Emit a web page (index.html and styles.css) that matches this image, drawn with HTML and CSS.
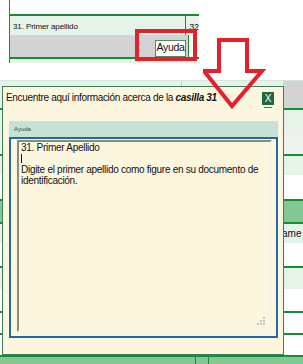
FILE: index.html
```html
<!DOCTYPE html>
<html lang="es">
<head>
    <meta charset="UTF-8">
    <title>Ayuda casilla 31</title>
    <link rel="stylesheet" href="styles.css">
</head>
<body>
    <div class="page">
        <div class="sheet">
            <div class="sheet-gap"></div>
            <div class="sheet-head">
                <div class="cell-label">31. Primer apellido</div>
                <div class="cell-next">32</div>
            </div>
            <div class="sheet-tools">
                <div class="tools-main">
                    <span class="btn-help">Ayuda</span>
                </div>
                <div class="tools-next"></div>
            </div>
            <div class="sheet-foot"></div>
        </div>

        <div class="back">
            <div class="back-strip">
                <div class="strip-a"></div>
                <div class="strip-b"></div>
                <div class="strip-grey"></div>
            </div>
            <div class="back-row line">
                <div class="band light h20"></div>
                <div class="band pale h24"></div>
            </div>
            <div class="back-row line">
                <div class="band light h19"></div>
                <div class="band white h24"></div>
            </div>
            <div class="back-row line">
                <div class="band fill h21"></div>
            </div>
            <div class="back-row line">
                <div class="band light h19 peek">ame</div>
                <div class="band white h23"></div>
            </div>
            <div class="back-row line">
                <div class="band light h21"></div>
                <div class="band white h22"></div>
            </div>
            <div class="back-row line">
                <div class="band white h20"></div>
            </div>
            <div class="back-row line">
                <div class="band white h20"></div>
            </div>
            <div class="back-row line">
                <div class="band fill h8 split">
                    <div class="split-a"></div>
                    <div class="split-b"></div>
                </div>
            </div>
        </div>

        <!-- ventana de ayuda -->
        <div class="dialog">
            <div class="dialog-title">
                <span>Encuentre aquí información acerca de la <b><i>casilla 31</i></b></span>
                <span class="dialog-close">X</span>
            </div>
            <div class="panel">
                <div class="panel-head">Ayuda</div>
                <div class="panel-body">
                    <div class="help-text">
                        <div>31. Primer Apellido</div>
                        <div><span class="caret"></span></div>
                        <div>Digite el primer apellido como figure en su documento de identificación.</div>
                        <span class="grip">
                            <svg width="9" height="9" viewBox="0 0 9 9">
                                <rect x="6" y="0" width="2" height="2" fill="#c9c5b8"/>
                                <rect x="3" y="3" width="2" height="2" fill="#c9c5b8"/>
                                <rect x="6" y="3" width="2" height="2" fill="#c9c5b8"/>
                                <rect x="0" y="6" width="2" height="2" fill="#c9c5b8"/>
                                <rect x="3" y="6" width="2" height="2" fill="#c9c5b8"/>
                                <rect x="6" y="6" width="2" height="2" fill="#c9c5b8"/>
                            </svg>
                        </span>
                    </div>
                </div>
            </div>
        </div>

        <div class="callout"></div>
        <svg class="arrow" width="66" height="76" viewBox="0 0 66 76">
            <polygon points="16,2 44,2 44,33 59,33 29,68 1,33 16,33" fill="none" stroke="#e3202b" stroke-width="4" stroke-linejoin="miter"/>
        </svg>
    </div>
</body>
</html>
```

FILE: styles.css
```css
body {
    margin: 0;
    background-color: #fff;
    font-family: "Liberation Sans", Arial, sans-serif;
    color: #111;
}

.page {
    position: relative;
    width: 303px;
    height: 364px;
    overflow: hidden;
}

/* tabla superior */
.sheet {
    margin-left: 9px;
    width: 189px;
    border-left: 1px solid #168c36;
}

.sheet-gap {
    height: 14px;
}

.sheet-head {
    display: flex;
    height: 19px;
    border-top: 2px solid #168c36;
    background-color: #e6f3e9;
    font-size: 8px;
    letter-spacing: -0.1px;
}

.cell-label {
    width: 175px;
    padding: 6px 0 0 3px;
}

.cell-next {
    flex: 1;
    border-left: 1px solid #168c36;
    padding: 6px 0 0 3px;
    font-size: 9px;
}

.sheet-tools {
    display: flex;
    height: 22px;
}

.tools-main {
    width: 178px;
    background-color: #d3d3d3;
    display: flex;
    justify-content: flex-end;
    align-items: flex-start;
    padding-top: 5px;
    box-sizing: border-box;
}

.tools-next {
    flex: 1;
    border-left: 1px solid #168c36;
}

.btn-help {
    width: 29px;
    height: 15px;
    margin-right: 2px;
    border: 1px solid #4f8a61;
    background-color: #fff;
    font-size: 10.5px;
    letter-spacing: -0.3px;
    line-height: 12px;
    text-align: center;
    overflow: hidden;
}

.sheet-foot {
    height: 4px;
    border-top: 2px solid #168c36;
    background-color: #e6f3e9;
}

/* fondo inferior */
.back {
    margin-top: 17px;
}

.back-strip {
    display: flex;
    height: 27px;
    border-top: 1px solid #d6e6da;
}

.strip-a {
    width: 181px;
    border-right: 1px solid #b9cfc0;
    background-color: #e6f3e9;
}

.strip-b {
    width: 101px;
    background-color: #e6f3e9;
}

.strip-grey {
    flex: 1;
    background-color: #d3d3d3;
}

.line {
    border-top: 2px solid #168c36;
}

.band.light { background-color: #e6f3e9; }
.band.pale { background-color: #eef2ef; }
.band.white { background-color: #fff; }
.band.fill { background-color: #82c794; }

.h8 { height: 8px; }
.h19 { height: 19px; }
.h20 { height: 20px; }
.h21 { height: 21px; }
.h22 { height: 22px; }
.h23 { height: 23px; }
.h24 { height: 24px; }

.peek {
    padding-left: 282px;
    font-size: 10px;
    line-height: 19px;
    white-space: nowrap;
    box-sizing: border-box;
}

.split {
    display: flex;
}

.split-a {
    width: 195px;
    border-right: 1px solid #168c36;
}

.split-b {
    width: 12px;
    border-right: 1px solid #168c36;
}

/* ventana */
.dialog {
    position: absolute;
    left: 2px;
    top: 86px;
    width: 280px;
    height: 267px;
    border: 1px solid #3c7e59;
    background-color: #fdf6df;
}

.dialog-title {
    display: flex;
    justify-content: space-between;
    align-items: center;
    height: 21px;
    padding: 0 9px 0 3px;
    font-size: 10px;
    letter-spacing: -0.32px;
}

.dialog-close {
    width: 12px;
    height: 13px;
    margin-top: 1px;
    background-color: #1d6b3d;
    color: #fff;
    font-size: 10px;
    letter-spacing: 0;
    line-height: 13px;
    text-align: center;
    box-shadow: 0 4px 0 -2px #fdf6df, 0 5px 0 -2px #2a8a48;
}

.panel {
    margin: 13px 5px 0 6px;
}

.panel-head {
    height: 15px;
    border-top: 1px solid #d3dbe8;
    background-color: #c6e2d7;
    font-size: 6px;
    line-height: 15px;
    padding-left: 5px;
    color: #3a4a44;
}

.panel-body {
    border: 2px solid #2467a8;
    padding: 1px 4px 4px 6px;
}

.help-text {
    position: relative;
    height: 188px;
    border-left: 2px solid #8d897c;
    border-top: 2px solid #8d897c;
    border-right: 2px solid #f6f3ea;
    border-bottom: 2px solid #f6f3ea;
    padding: 0 6px 0 2px;
    font-size: 10px;
    letter-spacing: -0.28px;
    line-height: 11px;
}

.caret {
    display: inline-block;
    width: 1px;
    height: 9px;
    background-color: #111;
    vertical-align: -1px;
}

.grip {
    position: absolute;
    right: 4px;
    bottom: 4px;
    line-height: 0;
}

/* marcas */
.callout {
    position: absolute;
    left: 135px;
    top: 29px;
    width: 54px;
    height: 24px;
    border: 4px solid #e3202b;
}

.arrow {
    position: absolute;
    left: 203px;
    top: 38px;
}
```
